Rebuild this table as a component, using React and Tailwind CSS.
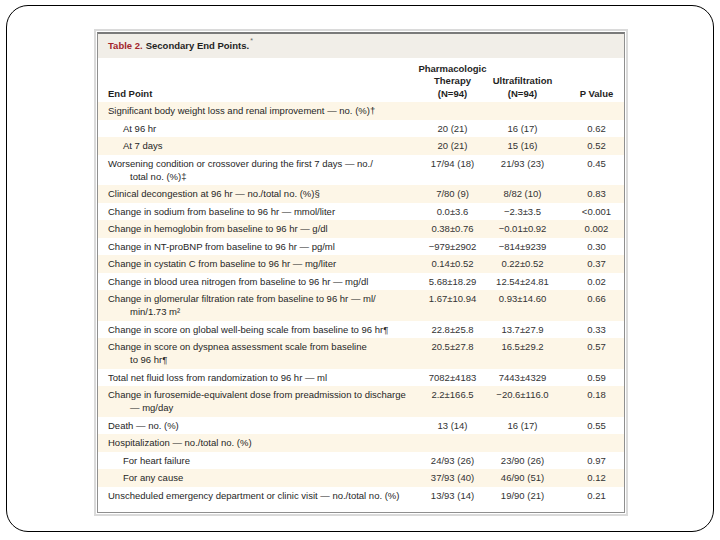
import React from "react";

const rows = [
  { label: ["Significant body weight loss and renal improvement — no. (%)†"], a: "", b: "", p: "" },
  { label: ["At 96 hr"], a: "20 (21)", b: "16 (17)", p: "0.62", sub: true },
  { label: ["At 7 days"], a: "20 (21)", b: "15 (16)", p: "0.52", sub: true },
  { label: ["Worsening condition or crossover during the first 7 days — no./", "total no. (%)‡"], a: "17/94 (18)", b: "21/93 (23)", p: "0.45" },
  { label: ["Clinical decongestion at 96 hr — no./total no. (%)§"], a: "7/80 (9)", b: "8/82 (10)", p: "0.83" },
  { label: ["Change in sodium from baseline to 96 hr — mmol/liter"], a: "0.0±3.6", b: "−2.3±3.5", p: "<0.001" },
  { label: ["Change in hemoglobin from baseline to 96 hr — g/dl"], a: "0.38±0.76", b: "−0.01±0.92", p: "0.002" },
  { label: ["Change in NT-proBNP from baseline to 96 hr — pg/ml"], a: "−979±2902", b: "−814±9239", p: "0.30" },
  { label: ["Change in cystatin C from baseline to 96 hr — mg/liter"], a: "0.14±0.52", b: "0.22±0.52", p: "0.37" },
  { label: ["Change in blood urea nitrogen from baseline to 96 hr — mg/dl"], a: "5.68±18.29", b: "12.54±24.81", p: "0.02" },
  { label: ["Change in glomerular filtration rate from baseline to 96 hr — ml/", "min/1.73 m²"], a: "1.67±10.94", b: "0.93±14.60", p: "0.66" },
  { label: ["Change in score on global well-being scale from baseline to 96 hr¶"], a: "22.8±25.8", b: "13.7±27.9", p: "0.33" },
  { label: ["Change in score on dyspnea assessment scale from baseline", "to 96 hr¶"], a: "20.5±27.8", b: "16.5±29.2", p: "0.57" },
  { label: ["Total net fluid loss from randomization to 96 hr — ml"], a: "7082±4183", b: "7443±4329", p: "0.59" },
  { label: ["Change in furosemide-equivalent dose from preadmission to discharge", "— mg/day"], a: "2.2±166.5", b: "−20.6±116.0", p: "0.18" },
  { label: ["Death — no. (%)"], a: "13 (14)", b: "16 (17)", p: "0.55" },
  { label: ["Hospitalization — no./total no. (%)"], a: "", b: "", p: "" },
  { label: ["For heart failure"], a: "24/93 (26)", b: "23/90 (26)", p: "0.97", sub: true },
  { label: ["For any cause"], a: "37/93 (40)", b: "46/90 (51)", p: "0.12", sub: true },
  { label: ["Unscheduled emergency department or clinic visit — no./total no. (%)"], a: "13/93 (14)", b: "19/90 (21)", p: "0.21" },
];

export default function App() {
  return (
    <div className="w-[720px] h-[540px] bg-white pt-[5px] pl-[6px]">
      <div className="w-[708px] h-[527px] rounded-[22px] border border-black pl-[87px] pt-[23px]">
        <div className="w-[534px] border-2 border-[#dadada] p-[1px] bg-white">
          <div
            className="border border-t-2 border-[#8f8f8f] border-t-[#7a7a7a] pb-[7.5px] text-[#262626]"
            style={{ fontFamily: '"Liberation Sans", Arial, sans-serif' }}
          >
            <div className="h-[24px] bg-[#f1eee8] flex items-center pl-[10px] text-[9.5px] font-bold">
              <span className="text-[#a3252c]">Table 2.</span>
              <span className="ml-[3px] text-[#1f1f1f]">Secondary End Points.</span>
              <sup className="text-[7px] font-normal text-[#666] ml-[1px] -mt-[4px]">*</sup>
            </div>
            <div className="h-[44px] grid grid-cols-[315px_79px_61px_71px] items-end pb-[2px] text-[9.5px] font-bold leading-[12.5px] text-[#1f1f1f]">
              <div className="pl-[10px]">End Point</div>
              <div className="text-center">
                Pharmacologic
                <br />
                Therapy
                <br />
                (N=94)
              </div>
              <div className="text-center">
                Ultrafiltration
                <br />
                (N=94)
              </div>
              <div className="text-center pl-[16px]">P Value</div>
            </div>
            {rows.map((r, i) => (
              <div
                key={i}
                className={`grid grid-cols-[315px_79px_61px_71px] items-start py-[2.25px] text-[9.5px] leading-[13px] ${
                  i % 2 === 0 ? "bg-[#fdf6e7]" : "bg-white"
                }`}
              >
                <div className={`whitespace-nowrap -indent-[22px] ${r.sub ? "pl-[47px]" : "pl-[32px]"}`}>
                  {r.label.map((l, j) => (
                    <React.Fragment key={j}>
                      {j > 0 && <br />}
                      {l}
                    </React.Fragment>
                  ))}
                </div>
                <div className="text-center text-[#333]">{r.a}</div>
                <div className="text-center text-[#333]">{r.b}</div>
                <div className="text-center pl-[16px] text-[#333]">{r.p}</div>
              </div>
            ))}
          </div>
        </div>
      </div>
    </div>
  );
}
